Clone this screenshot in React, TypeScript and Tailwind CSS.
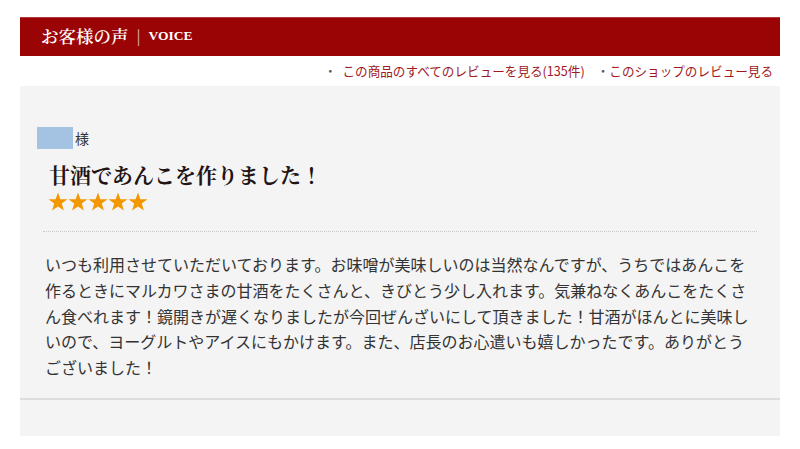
import React from "react";

const serif = { fontFamily: '"Noto Serif CJK JP", "Liberation Serif", "Noto Sans CJK JP", serif' };

function Star() {
  return (
    <svg width="20" height="19" viewBox="0 0 20 19" className="block">
      <polygon
        points="10,0.5 12.35,7.2 19.5,7.3 13.8,11.6 15.9,18.5 10,14.4 4.1,18.5 6.2,11.6 0.5,7.3 7.65,7.2"
        fill="#f39800"
      />
    </svg>
  );
}

export default function App() {
  return (
    <div className="w-[800px] h-[449px] bg-white pt-[17px] px-[20px]" style={{ fontFamily: '"Noto Sans CJK JP", sans-serif' }}>
      <div className="h-[39px] bg-[#9b0404] border-t border-[#b33a3a] flex items-center pl-[21px] pb-[3px] text-white">
        <span className="text-[17.5px] leading-none font-semibold" style={serif}>お客様の声</span>
        <span className="ml-[8px] mr-[8px] text-[15px] leading-none text-[#e3b0b0]">|</span>
        <span className="text-[13.5px] leading-none font-bold" style={{ fontFamily: '"Liberation Serif", serif' }}>VOICE</span>
      </div>
      <div className="h-[30px] flex items-center justify-end pr-[7px] text-[12.6px] text-[#a01822] gap-[12px]">
        <span><span className="text-[#555] mr-[6px]">・</span>この商品のすべてのレビューを見る(135件)</span>
        <span><span className="text-[#555]">・</span>このショップのレビュー見る</span>
      </div>
      <div className="bg-[#f4f4f4] h-[350px] flex flex-col">
        <div className="flex-1 border-b-2 border-[#dddddd] pl-[17px] pr-[23px] pt-[41px]">
          <div className="flex items-center h-[22px]">
            <div className="w-[36px] h-[22px] bg-[#a4c2e2]" />
            <span className="ml-[2px] text-[14px] text-[#333] leading-none">様</span>
          </div>
          <div className="pl-[12px] mt-[11px] text-[21px] font-bold text-[#231414] leading-[28px]" style={serif}>
            甘酒であんこを作りました！
          </div>
          <div className="pl-[11px] mt-[4px] flex">
            <Star />
            <Star />
            <Star />
            <Star />
            <Star />
          </div>
          <div className="ml-[6px] mt-[20px] border-t border-dotted border-[#c8c8c8]" />
          <p className="ml-[8px] mt-[20px] text-[16px] leading-[25.8px] text-[#333]">
            いつも利用させていただいております。お味噌が美味しいのは当然なんですが、うちではあんこを作るときにマルカワさまの甘酒をたくさんと、きびとう少し入れます。気兼ねなくあんこをたくさん食べれます！鏡開きが遅くなりましたが今回ぜんざいにして頂きました！甘酒がほんとに美味しいので、ヨーグルトやアイスにもかけます。また、店長のお心遣いも嬉しかったです。ありがとうございました！
          </p>
        </div>
        <div className="h-[36px]" />
      </div>
    </div>
  );
}
